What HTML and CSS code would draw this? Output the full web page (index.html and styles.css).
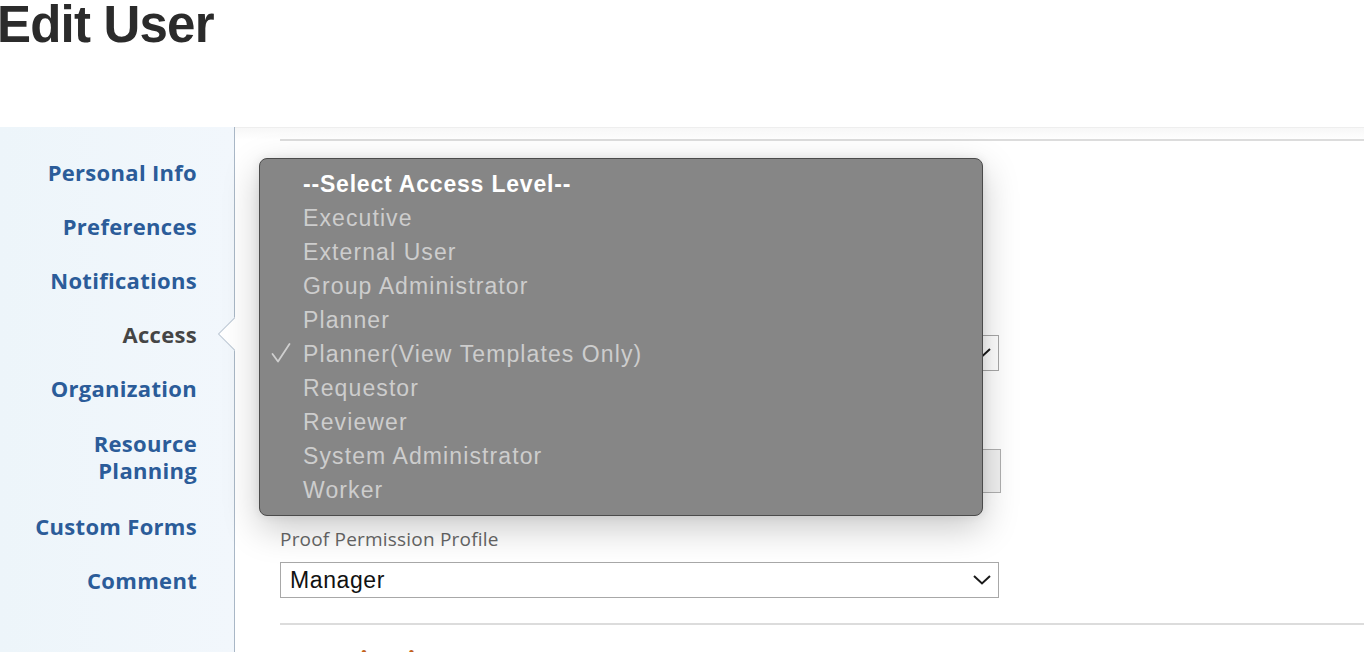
FILE: index.html
```html
<!DOCTYPE html>
<html lang="en">
<head>
<meta charset="utf-8">
<title>Edit User</title>
<link rel="stylesheet" href="styles.css">
</head>
<body>
<header class="page-header">
  <h1 class="page-title">Edit User</h1>
</header>
<div class="layout">
  <nav class="sidebar">
    <a class="nav-item" href="#">Personal Info</a>
    <a class="nav-item" href="#">Preferences</a>
    <a class="nav-item" href="#">Notifications</a>
    <a class="nav-item active" href="#">Access<span class="notch"><span class="notch-box"></span></span></a>
    <a class="nav-item" href="#">Organization</a>
    <a class="nav-item multi" href="#">Resource<br>Planning</a>
    <a class="nav-item" href="#">Custom Forms</a>
    <a class="nav-item" href="#">Comment</a>
  </nav>
  <main class="main">
    <section class="section">
      <div class="field field-access">
        <label class="field-label">Access Level</label>
        <div class="select select-access">
          <span class="select-value">Planner(View Templates Only)</span>
          <svg class="chevron" width="18" height="10" viewBox="0 0 18 10"><path d="M1 1 L9 8.5 L17 1" fill="none" stroke="#1a1a1a" stroke-width="2"/></svg>
        </div>
      </div>
      <div class="field field-layout">
        <label class="field-label">Layout Template</label>
        <div class="input input-disabled"></div>
      </div>
      <div class="field field-proof">
        <label class="field-label">Proof Permission Profile</label>
        <div class="select">
          <span class="select-value">Manager</span>
          <svg class="chevron" width="18" height="10" viewBox="0 0 18 10"><path d="M1 1 L9 8.5 L17 1" fill="none" stroke="#1a1a1a" stroke-width="2"/></svg>
        </div>
      </div>
    </section>
    <section class="section section-next">
      <h2 class="section-title">Organization</h2>
    </section>

    <div class="menu">
      <div class="menu-item menu-heading">--Select Access Level--</div>
      <div class="menu-item">Executive</div>
      <div class="menu-item">External User</div>
      <div class="menu-item">Group Administrator</div>
      <div class="menu-item">Planner</div>
      <div class="menu-item checked"><svg class="check" width="20" height="22" viewBox="0 0 20 22"><path d="M1.5 12 L7 19.5 L18.5 2" fill="none" stroke="#cfcfcf" stroke-width="1.8" stroke-linecap="round" stroke-linejoin="round"/></svg>Planner(View Templates Only)</div>
      <div class="menu-item">Requestor</div>
      <div class="menu-item">Reviewer</div>
      <div class="menu-item">System Administrator</div>
      <div class="menu-item">Worker</div>
    </div>
  </main>
</div>
</body>
</html>
```

FILE: styles.css
```css
html, body {
  margin: 0;
  padding: 0;
  background: #ffffff;
  overflow: hidden;
}

body {
  width: 1364px;
  height: 652px;
  font-family: "Open Sans", "Liberation Sans", sans-serif;
}

.page-header {
  height: 127px;
}

.page-title {
  margin: 0 0 0 -3px;
  padding: 0;
  font-family: "Liberation Sans", Arial, sans-serif;
  font-weight: 700;
  font-size: 51px;
  line-height: 50px;
  letter-spacing: -0.8px;
  color: #2b2b2b;
}

.layout {
  display: flex;
  height: 525px;
}

.sidebar {
  position: relative;
  width: 234px;
  flex: 0 0 234px;
  border-right: 1px solid #a9b7c6;
  background: linear-gradient(90deg, #edf5fa 0%, #f2f7fc 100%);
  padding-top: 18px;
  display: flex;
  flex-direction: column;
  align-items: stretch;
}

.nav-item {
  display: block;
  position: relative;
  padding: 13.5px 37px 13.5px 0;
  text-align: right;
  font-family: "Open Sans", sans-serif;
  font-weight: 700;
  font-size: 22px;
  line-height: 27px;
  letter-spacing: 0.3px;
  color: #2b5c99;
  text-decoration: none;
}

.nav-item.multi {
  padding-top: 15px;
  padding-bottom: 15px;
}

.nav-item.active {
  color: #454545;
}

.notch {
  position: absolute;
  left: 217px;
  top: 4px;
  width: 18px;
  height: 46px;
  overflow: hidden;
}

.notch-box {
  position: absolute;
  left: 7px;
  top: 8px;
  width: 30px;
  height: 30px;
  background: #ffffff;
  border: 1px solid #bcc8d5;
  transform: rotate(45deg);
  box-sizing: border-box;
}

.main {
  position: relative;
  flex: 1;
  border-top: 1px solid #eeeeee;
  padding-left: 45px;
  padding-top: 11px;
  background: linear-gradient(180deg, #f7f7f7 0px, #ffffff 12px);
}

.section {
  border-top: 2px solid #dcdcdc;
}

.field {
  display: flex;
  flex-direction: column;
  gap: 12px;
}

.field-label {
  font-family: "Open Sans", sans-serif;
  font-size: 19px;
  line-height: 22px;
  letter-spacing: 0.2px;
  color: #666666;
}

.field-access {
  padding-top: 160px;
}

.field-layout {
  margin-top: 44px;
}

.field-proof {
  margin-top: 35px;
}

.select {
  width: 701px;
  height: 34px;
  border: 1px solid #a8a8a8;
  background: #ffffff;
  display: flex;
  align-items: center;
  justify-content: space-between;
  padding: 0 7px 0 9px;
}

.select-value {
  font-family: "Liberation Sans", Arial, sans-serif;
  font-size: 23px;
  letter-spacing: 0.6px;
  color: #111111;
}

.chevron {
  display: block;
}

.input {
  width: 719px;
  height: 42px;
  border: 1px solid #b0b0b0;
}

.input-disabled {
  background: #f1f1f1;
}

.section-next {
  margin-top: 25px;
  padding-top: 21px;
}

.section-title {
  margin: 0;
  font-family: "Open Sans", sans-serif;
  font-weight: 700;
  font-size: 26px;
  line-height: 30px;
  color: #c2611b;
}

.menu {
  position: absolute;
  left: 24px;
  top: 30px;
  width: 724px;
  height: 358px;
  padding: 8px 0 10px 0;
  box-sizing: border-box;
  background: #868686;
  border: 1px solid #4b4b4b;
  border-radius: 8px;
  box-shadow: 0 12px 36px rgba(0, 0, 0, 0.22), 0 0 10px rgba(0, 0, 0, 0.08);
}

.menu-item {
  position: relative;
  height: 34px;
  line-height: 34px;
  padding-left: 43px;
  font-family: "Liberation Sans", Arial, sans-serif;
  font-size: 23px;
  letter-spacing: 1.1px;
  color: #cdcdcd;
  white-space: nowrap;
}

.menu-heading {
  color: #ffffff;
  font-weight: 700;
  letter-spacing: 0.8px;
}

.check {
  position: absolute;
  left: 11px;
  top: 5px;
}
```
